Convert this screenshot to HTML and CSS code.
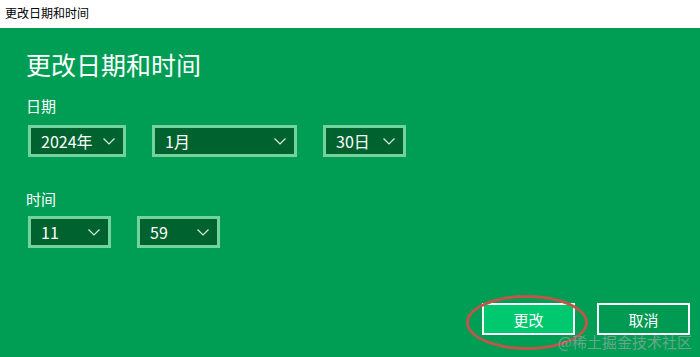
FILE: index.html
```html
<!DOCTYPE html>
<html>
<head>
    <meta charset="utf-8">
    <title>更改日期和时间</title>
    <link rel="stylesheet" href="styles.css">
</head>
<body>

<div class="titlebar">更改日期和时间</div>

<div class="panel">
    <h1>更改日期和时间</h1>

    <div class="field-label">日期</div>
    <div class="row">
        <div class="combo w-year"><span>2024年</span><svg class="chev" width="12" height="7" viewBox="0 0 12 7"><polyline points="0.5,0.5 6,6 11.5,0.5"/></svg></div>
        <div class="combo w-month"><span>1月</span><svg class="chev" width="12" height="7" viewBox="0 0 12 7"><polyline points="0.5,0.5 6,6 11.5,0.5"/></svg></div>
        <div class="combo w-small"><span>30日</span><svg class="chev" width="12" height="7" viewBox="0 0 12 7"><polyline points="0.5,0.5 6,6 11.5,0.5"/></svg></div>
    </div>

    <div class="field-label time-label">时间</div>
    <div class="row time-row">
        <div class="combo w-small"><span>11</span><svg class="chev" width="12" height="7" viewBox="0 0 12 7"><polyline points="0.5,0.5 6,6 11.5,0.5"/></svg></div>
        <div class="combo w-small"><span>59</span><svg class="chev" width="12" height="7" viewBox="0 0 12 7"><polyline points="0.5,0.5 6,6 11.5,0.5"/></svg></div>
    </div>

    <div class="actions">
        <button class="btn btn-primary">更改</button>
        <button class="btn">取消</button>
    </div>

    <!-- annotation circle drawn over the screenshot -->
    <div class="mark"></div>
    <div class="watermark">@稀土掘金技术社区</div>
</div>

</body>
</html>
```

FILE: styles.css
```css
body {
    margin: 0;
    padding: 0;
    font-family: 'Noto Sans CJK SC', 'Noto Sans', sans-serif;
    background: #fff;
}

.titlebar {
    height: 28px;
    line-height: 26px;
    padding-left: 5px;
    font-size: 12px;
    color: #000;
    background: #fff;
}

.panel {
    position: relative;
    display: flex;
    flex-direction: column;
    height: 329px;
    box-sizing: border-box;
    padding: 0 10px 22px 26px;
    background-color: #009e55;
    color: #fff;
}

h1 {
    font-size: 25px;
    font-weight: 400;
    line-height: 30px;
    margin: 21px 0 0 0;
}

.field-label {
    font-size: 15px;
    line-height: 20px;
    margin-top: 17px;
}
.time-label {
    margin-top: 32px;
}

.row {
    display: flex;
    gap: 26px;
    margin-top: 9px;
    padding-left: 2px;
}
.time-row {
    margin-top: 7px;
}

.combo {
    display: flex;
    align-items: center;
    justify-content: space-between;
    box-sizing: border-box;
    height: 32px;
    padding: 0 8px 0 10px;
    border: 3px solid #72d39f;
    background-color: #00622f;
    font-size: 16px;
    color: #fff;
}
.w-year { width: 98px; }
.w-month { width: 145px; }
.w-small { width: 83px; }

.chev polyline {
    fill: none;
    stroke: #d6eee0;
    stroke-width: 1.2;
}

.actions {
    display: flex;
    justify-content: flex-end;
    gap: 22px;
    margin-top: auto;
}

.btn {
    width: 93px;
    height: 32px;
    border: 2px solid #fff;
    background-color: #009a52;
    color: #fff;
    font-family: 'Noto Sans CJK SC', sans-serif;
    font-size: 15px;
    padding: 0;
}
.btn-primary {
    background-color: #00c86e;
}

.mark {
    position: absolute;
    left: 466px;
    top: 267px;
    width: 122px;
    height: 55px;
    box-sizing: border-box;
    border: 3px solid #c2544a;
    border-radius: 50%;
}

.watermark {
    position: absolute;
    right: 8px;
    bottom: 6px;
    font-size: 15px;
    line-height: 18px;
    color: rgba(210, 225, 218, 0.35);
    text-shadow: 0 0 1px rgba(100, 120, 110, 0.5);
}
```
